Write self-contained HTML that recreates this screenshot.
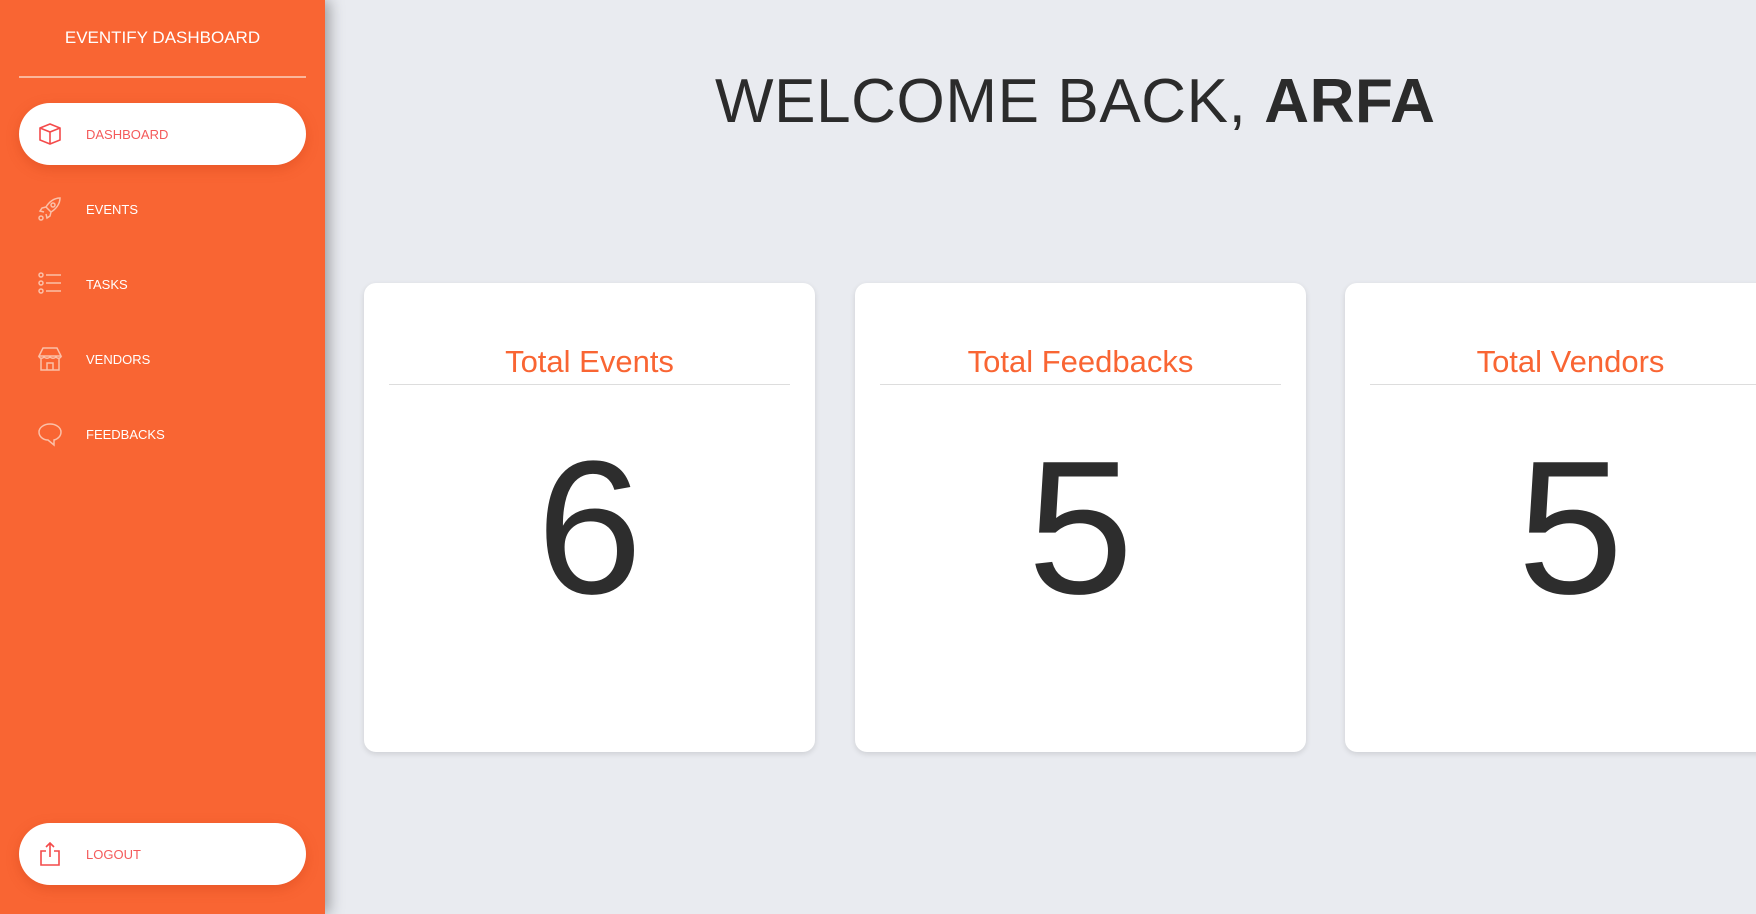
<!DOCTYPE html>
<html><head><meta charset="utf-8"><style>
*{box-sizing:border-box;margin:0;padding:0}
body{width:1756px;height:914px;overflow:hidden;background:#e9ebf0;font-family:"Liberation Sans",sans-serif;position:relative}
.side{position:absolute;left:0;top:0;width:325px;height:914px;background:#f96533;box-shadow:4px 0 14px rgba(0,0,0,.35);z-index:2}
.brand{position:absolute;top:28px;left:0;width:325px;text-align:center;color:#fff;font-size:17px}
.hr{position:absolute;top:76px;left:19px;width:287px;height:2px;background:#fbb69b}
.item{position:absolute;left:19px;width:287px;height:62px;border-radius:31px;color:#fff;font-size:13px}
.item.act{background:#fff;color:#f45a5a;box-shadow:0 4px 12px rgba(200,60,20,.35)}
.item span{position:absolute;left:67px;top:24px}
.item svg{position:absolute;left:18px;top:18px}
.main h1{position:absolute;top:66px;left:715px;font-size:62px;font-weight:normal;color:#2b2b2b;letter-spacing:0.6px;white-space:nowrap}
.card{position:absolute;top:283px;width:451px;height:469px;background:#fff;border-radius:12px;box-shadow:0 2px 6px rgba(0,0,0,.12)}
.ct{position:absolute;top:61px;left:25px;right:25px;text-align:center;color:#f96533;font-size:31px;padding-bottom:4px;border-bottom:1px solid #ddd}
.num{position:absolute;top:150px;left:0;right:0;text-align:center;font-size:190px;color:#2d2d2d;line-height:1}
</style></head><body>
<div class="side">
<div class="brand">EVENTIFY DASHBOARD</div>
<div class="hr"></div>
<div class="item act" style="top:103px"><svg width="26" height="26" viewBox="0 0 26 26" fill="none" stroke="#f44a4a" stroke-width="1.6"><path d="M3 7l10-4 10 4v12l-10 4-10-4z M3 7l10 4 10-4 M13 11v12"/></svg><span>DASHBOARD</span></div>
<div class="item" style="top:178px"><svg width="26" height="26" viewBox="0 0 26 26" fill="none" stroke="#fbc0a8" stroke-width="1.5"><path d="M23 2c-6 0-11 4-14 9l5 5c5-3 9-8 9-14z M9 11l-4 1-2 3 4 1 M14 16l-1 4-3 2-1-4"/><circle cx="16" cy="9" r="2"/><circle cx="4" cy="22" r="2"/></svg><span>EVENTS</span></div>
<div class="item" style="top:253px"><svg width="26" height="26" viewBox="0 0 26 26" fill="none" stroke="#fbc0a8" stroke-width="1.5"><circle cx="4" cy="4" r="2"/><circle cx="4" cy="12" r="2"/><circle cx="4" cy="20" r="2"/><path d="M9 4h15M9 12h15M9 20h15"/></svg><span>TASKS</span></div>
<div class="item" style="top:328px"><svg width="26" height="26" viewBox="0 0 26 26" fill="none" stroke="#fbc0a8" stroke-width="1.5"><path d="M6 2h14l4 8H2z M2 10c0 3 5 3 5 0 0 3 6 3 6 0 0 3 6 3 6 0 0 3 5 3 5 0 M4 12v12h18V12 M10 24v-7h6v7"/></svg><span>VENDORS</span></div>
<div class="item" style="top:403px"><svg width="26" height="26" viewBox="0 0 26 26" fill="none" stroke="#fbc0a8" stroke-width="1.5"><path d="M13 3C7 3 2 6.5 2 11s4 8 9 8l6 5v-5c4-1 7-4 7-8 0-4.5-5-8-11-8z"/></svg><span>FEEDBACKS</span></div>
<div class="item act" style="top:823px"><svg width="26" height="26" viewBox="0 0 26 26" fill="none" stroke="#f44a4a" stroke-width="1.6"><path d="M13 2v14M9 6l4-4 4 4M9 10H4v14h18V10h-5"/></svg><span>LOGOUT</span></div>
</div>
<div class="main">
<h1>WELCOME BACK, <b>ARFA</b></h1>
<div class="card" style="left:364px"><div class="ct">Total Events</div><div class="num">6</div></div>
<div class="card" style="left:855px"><div class="ct">Total Feedbacks</div><div class="num">5</div></div>
<div class="card" style="left:1345px"><div class="ct">Total Vendors</div><div class="num">5</div></div>
</div>
</body></html>
